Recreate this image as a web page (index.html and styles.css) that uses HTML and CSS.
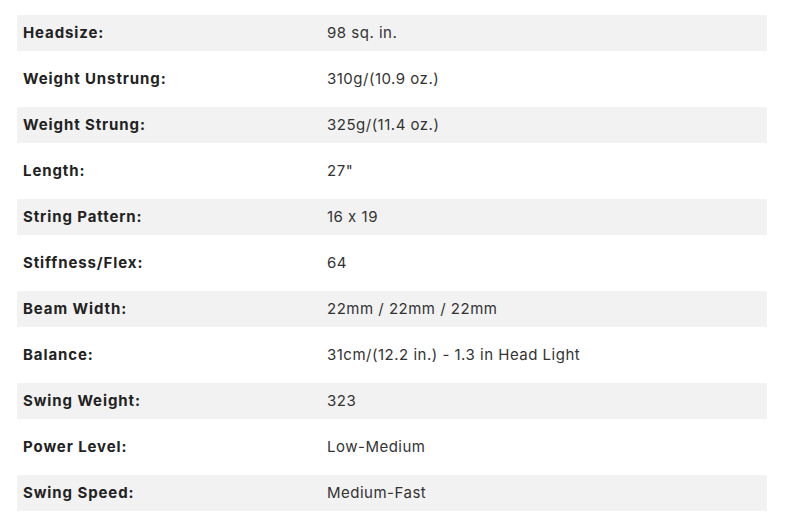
FILE: index.html
```html
<!DOCTYPE html>
<html>
<head>
<meta charset="utf-8">
<link rel="stylesheet" href="styles.css">
</head>
<body>
<div class="specs">
  <div class="row alt"><div class="label">Headsize:</div><div class="value">98 sq. in.</div></div>
  <div class="row"><div class="label">Weight Unstrung:</div><div class="value">310g/(10.9 oz.)</div></div>
  <div class="row alt"><div class="label">Weight Strung:</div><div class="value">325g/(11.4 oz.)</div></div>
  <div class="row"><div class="label">Length:</div><div class="value">27"</div></div>
  <div class="row alt"><div class="label">String Pattern:</div><div class="value">16 x 19</div></div>
  <div class="row"><div class="label">Stiffness/Flex:</div><div class="value">64</div></div>
  <div class="row alt"><div class="label">Beam Width:</div><div class="value">22mm / 22mm / 22mm</div></div>
  <div class="row"><div class="label">Balance:</div><div class="value">31cm/(12.2 in.) - 1.3 in Head Light</div></div>
  <div class="row alt"><div class="label">Swing Weight:</div><div class="value">323</div></div>
  <div class="row"><div class="label">Power Level:</div><div class="value">Low-Medium</div></div>
  <div class="row alt"><div class="label">Swing Speed:</div><div class="value">Medium-Fast</div></div>
</div>
</body>
</html>
```
FILE: styles.css
```css
html, body { margin: 0; padding: 0; background: #fff; }
body {
  font-family: Inter, "Noto Sans", sans-serif;
  font-size: 15px;
  font-feature-settings: "calt" 0;
}
.specs {
  display: flex;
  flex-direction: column;
  gap: 10px;
  width: 750px;
  margin: 15px 0 0 17px;
}
.row {
  display: grid;
  grid-template-columns: 304px 1fr;
  height: 36px;
  padding-bottom: 2px;
  box-sizing: border-box;
  align-items: center;
}
.row.alt { background: #f2f2f2; }
.label { padding-left: 6px; font-weight: 700; color: #222; letter-spacing: 0.9px; }
.value { padding-left: 6px; color: #333; letter-spacing: 0.5px; }
```
